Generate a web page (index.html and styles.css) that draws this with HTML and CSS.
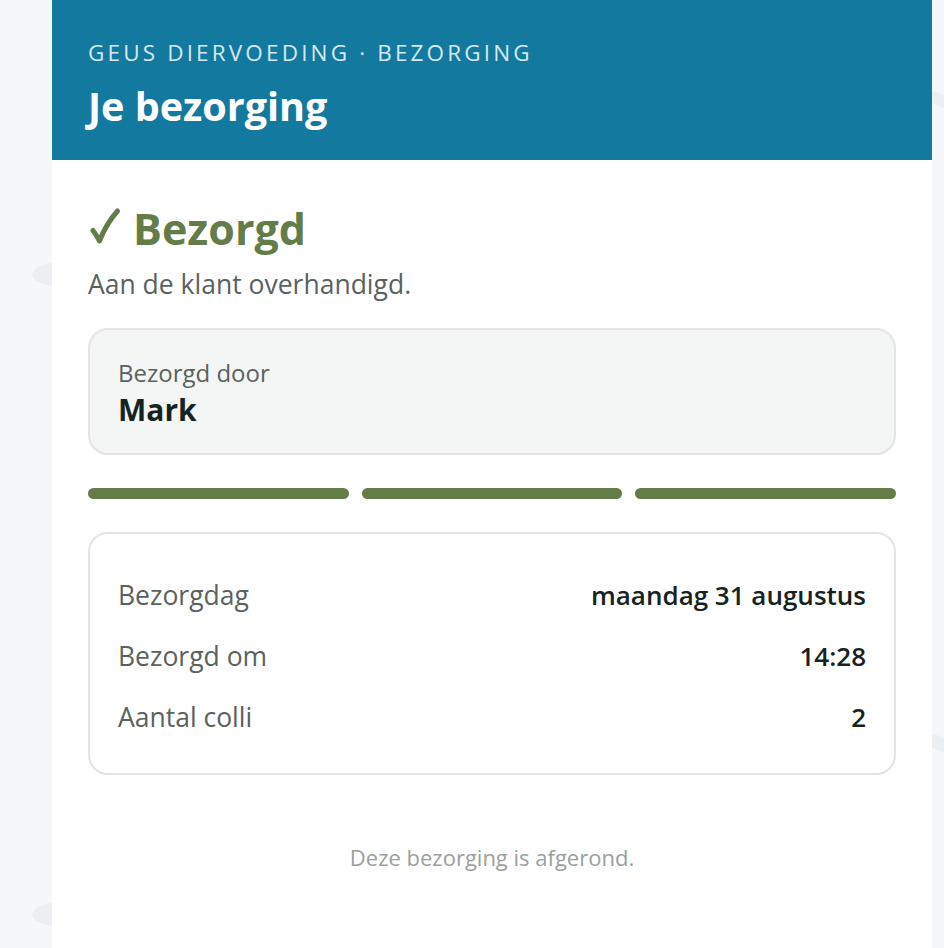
FILE: index.html
```html
<!DOCTYPE html>
<html lang="nl">
<head>
<meta charset="utf-8">
<title>Je bezorging</title>
<link rel="stylesheet" href="styles.css">
</head>
<body>
<div class="backdrop" aria-hidden="true">
  <span class="blob blob-l1"></span>
  <span class="blob blob-l2"></span>
  <span class="blob blob-r1"></span>
  <span class="blob blob-r2"></span>
</div>
<main class="card">
  <header class="hero">
    <div class="eyebrow">GEUS DIERVOEDING · BEZORGING</div>
    <h1 class="title">Je bezorging</h1>
  </header>
  <section class="content">
    <h2 class="status">
      <svg class="check" width="36" height="40" viewBox="0 0 36 40" aria-hidden="true">
        <path d="M5 22.5 Q8 26.5 11.5 33 Q18 16 29.5 3" fill="none" stroke="#647c47" stroke-width="5" stroke-linecap="round" stroke-linejoin="round"/>
      </svg>
      <span>Bezorgd</span>
    </h2>
    <p class="status-sub">Aan de klant overhandigd.</p>
    <div class="driver">
      <div class="driver-label">Bezorgd door</div>
      <div class="driver-name">Mark</div>
    </div>
    <div class="progress">
      <span class="seg"></span>
      <span class="seg"></span>
      <span class="seg"></span>
    </div>
    <div class="details">
      <div class="row"><span class="k">Bezorgdag</span><span class="v">maandag 31 augustus</span></div>
      <div class="row"><span class="k">Bezorgd om</span><span class="v">14:28</span></div>
      <div class="row"><span class="k">Aantal colli</span><span class="v">2</span></div>
    </div>
    <p class="footnote">Deze bezorging is afgerond.</p>
  </section>
</main>
</body>
</html>
```
FILE: styles.css
```css
* { box-sizing: border-box; }
html, body { margin: 0; padding: 0; }
body {
  background: #f6f7f9;
  font-family: "Open Sans", "Noto Sans", sans-serif;
  min-height: 948px;
  position: relative;
  overflow: hidden;
}
.backdrop { position: absolute; inset: 0; z-index: 0; }
.blob { position: absolute; background: #eceff2; border-radius: 50%; }
.blob-l1 { left: 32px; top: 262px; width: 60px; height: 25px; }
.blob-l2 { left: 32px; top: 902px; width: 60px; height: 25px; }
.blob-r1 { left: 900px; top: 96px; width: 90px; height: 12px; transform: rotate(22deg); }
.blob-r2 { left: 900px; top: 738px; width: 90px; height: 14px; transform: rotate(18deg); }

.card {
  position: relative;
  z-index: 1;
  margin-left: 52px;
  width: 880px;
  min-height: 948px;
  background: #ffffff;
}
.hero {
  background: #13799f;
  height: 160px;
  padding: 38px 36px 0;
}
.eyebrow {
  color: #d6e9f0;
  font-size: 22.5px;
  line-height: 30px;
  letter-spacing: 0.14em;
  white-space: nowrap;
}
.title {
  margin: 14px 0 0;
  color: #ffffff;
  font-size: 39.5px;
  line-height: 48px;
  font-weight: 700;
}
.content { padding: 41px 36px 0; display: flex; flex-direction: column; }
.status {
  margin: 0;
  color: #647c47;
  font-size: 43px;
  line-height: 56px;
  font-weight: 700;
  display: flex;
  align-items: center;
  gap: 9px;
}
.check { display: block; margin-top: -2px; }
.status-sub {
  margin: 11px 0 0;
  color: #5a625e;
  font-size: 26.5px;
  line-height: 32px;
}
.driver {
  margin-top: 28px;
  background: #f4f6f6;
  border: 2px solid #e3e5e5;
  border-radius: 20px;
  padding: 29px 28px 25px;
}
.driver-label { color: #5a625e; font-size: 24px; line-height: 28px; }
.driver-name { margin-top: 5px; color: #172320; font-size: 30px; line-height: 36px; font-weight: 700; }
.progress { margin-top: 33px; display: flex; gap: 13px; }
.seg { flex: 1; height: 11px; border-radius: 6px; background: #647c47; }
.details {
  margin-top: 33px;
  border: 2px solid #e3e5e5;
  border-radius: 20px;
  padding: 30px 28px 26px;
}
.row { height: 61px; display: flex; align-items: center; justify-content: space-between; }
.k { color: #5a625e; font-size: 26.5px; }
.v { color: #172320; font-size: 26px; font-weight: 600; }
.footnote {
  margin: 67px 0 0;
  text-align: center;
  color: #9aa19e;
  font-size: 22px;
  line-height: 30px;
}
```
